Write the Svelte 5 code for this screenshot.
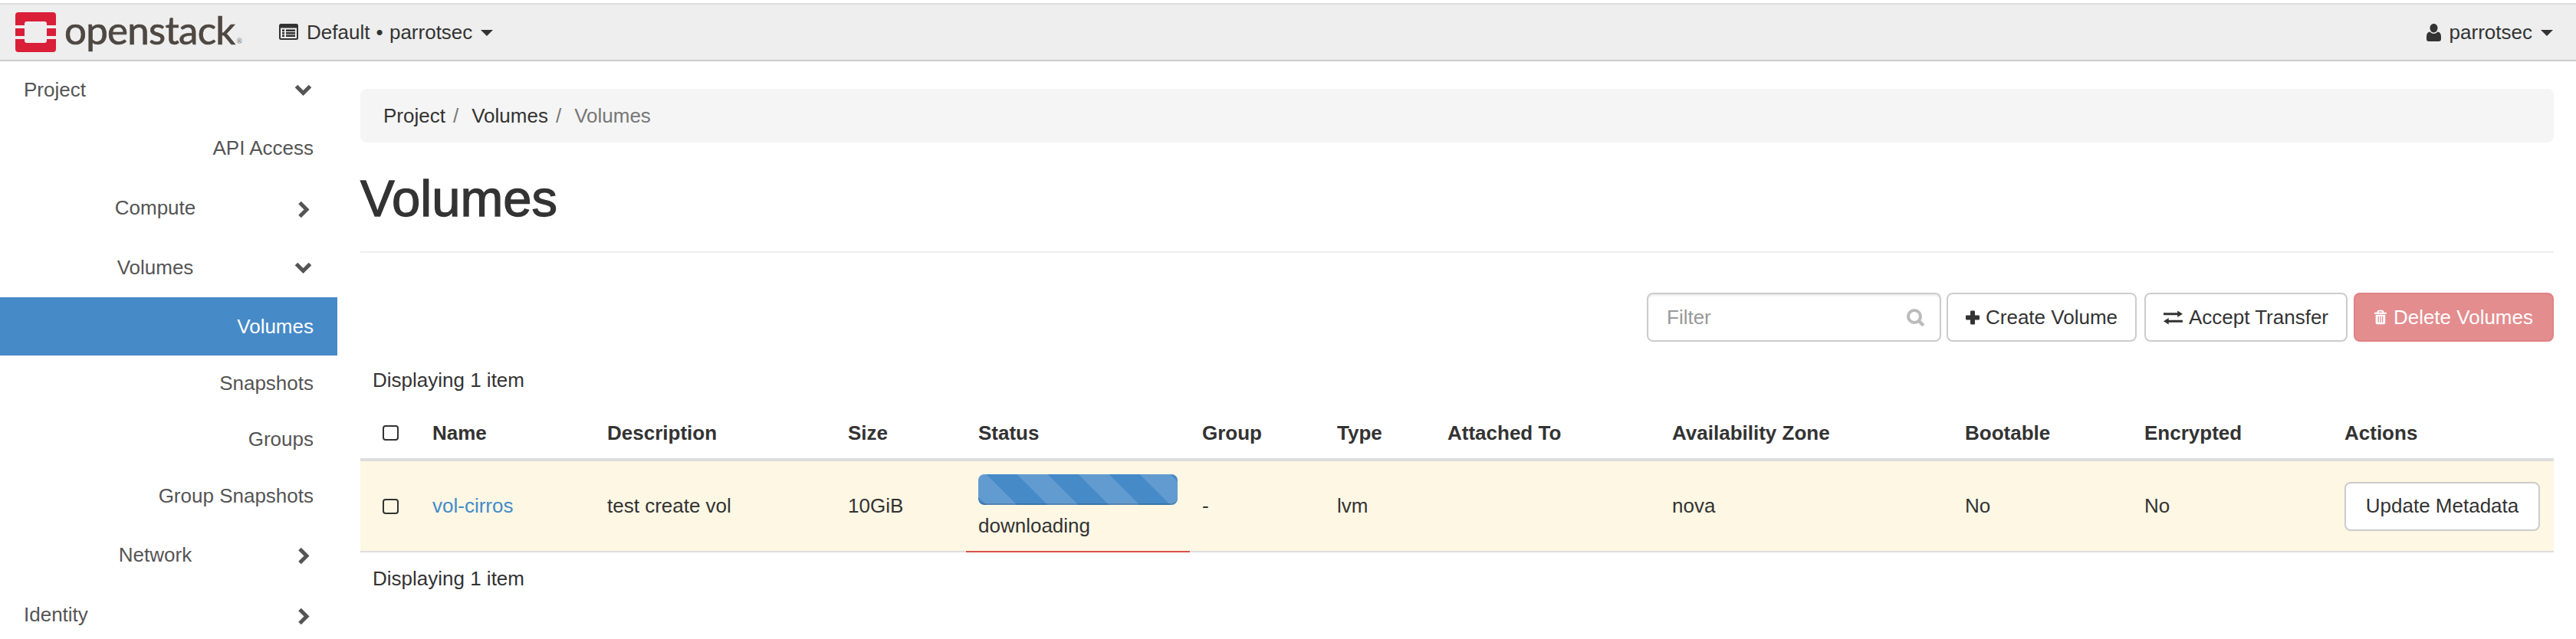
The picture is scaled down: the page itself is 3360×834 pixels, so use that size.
<script>
  const sideRows = [
    { label: 'Project', level: 1, h: 74, chev: 'down' },
    { label: 'API Access', level: 3, h: 79 },
    { label: 'Compute', level: 2, h: 77, chev: 'right' },
    { label: 'Volumes', level: 2, h: 78, chev: 'down' },
    { label: 'Volumes', level: 3, h: 76, active: true },
    { label: 'Snapshots', level: 3, h: 72 },
    { label: 'Groups', level: 3, h: 74 },
    { label: 'Group Snapshots', level: 3, h: 74 },
    { label: 'Network', level: 2, h: 80, chev: 'right' },
    { label: 'Identity', level: 1, h: 77, chev: 'right' }
  ];
  const heads = ['Name', 'Description', 'Size', 'Status', 'Group', 'Type', 'Attached To', 'Availability Zone', 'Bootable', 'Encrypted', 'Actions'];
  const widths = [78, 228, 314, 170, 292, 176, 144, 293, 382, 234, 261, 289];
</script>

<div class="page">
  <header class="nav">
    <div class="logo">
      <svg class="mark" viewBox="0 0 53 52" aria-hidden="true">
        <path fill="#da1f38" d="M4 0h45a4 4 0 0 1 4 4v13H41v-2a3 3 0 0 0-3-3H15a3 3 0 0 0-3 3v2H0V4a4 4 0 0 1 4-4zM0 21h12v10H0zM41 21h12v10H41zM0 35h12v2a3 3 0 0 0 3 3h23a3 3 0 0 0 3-3v-2h12v13a4 4 0 0 1-4 4H4a4 4 0 0 1-4-4z"/>
      </svg>
      <span class="wordmark">openstack</span><span class="reg">®</span>
    </div>
    <div class="project">
      <svg class="ico-list" viewBox="0 0 25 21" aria-hidden="true">
        <path fill="#333" fill-rule="evenodd" d="M2.500 0h20A2.500 2.500 0 0 1 25 2.500v16a2.500 2.500 0 0 1-2.500 2.500h-20A2.500 2.500 0 0 1 0 18.500v-16A2.500 2.500 0 0 1 2.500 0zM2 5.500v13c0 .3.200.5.500.5h20c.3 0 .5-.2.500-.5v-13zM4 7.500h3V10H4zM9 7.500h12V10H9zM4 11h3v2.500H4zM9 11h12v2.500H9zM4 14.500h3V17H4zM9 14.500h12V17H9z"/>
      </svg>
      <span class="project-name">Default • parrotsec</span>
      <span class="caret"></span>
    </div>
    <div class="user">
      <svg class="ico-user" viewBox="0 0 19 23" aria-hidden="true">
        <path fill="#333" d="M9.500 0c3 0 5 2.400 5 5.500S12.500 11.500 9.500 11.500 4.500 8.600 4.500 5.500 6.500 0 9.500 0zM4.500 10.500c1.200 1.600 3 2.500 5 2.500s3.800-.9 5-2.500c2.800.3 4.500 2.500 4.500 6.300v3.200c0 1.800-1.200 3-3 3H3c-1.800 0-3-1.200-3-3v-3.200c0-3.800 1.700-6 4.500-6.300z"/>
      </svg>
      <span class="user-name">parrotsec</span>
      <span class="caret"></span>
    </div>
  </header>

  <div class="body">
    <aside class="side">
      {#each sideRows as r}
        <div class="row l{r.level}" class:active={r.active} style="height:{r.h}px">
          <span class="lab">{r.label}</span>
          {#if r.chev === 'down'}
            <svg class="chev-d" viewBox="0 0 23 15" aria-hidden="true"><path fill="none" stroke="#555" stroke-width="5" d="M2.500 2.500l9 9 9-9"/></svg>
          {:else if r.chev === 'right'}
            <svg class="chev-r" viewBox="0 0 16 23" aria-hidden="true"><path fill="none" stroke="#555" stroke-width="5" d="M3 2.500l9 9-9 9"/></svg>
          {/if}
        </div>
      {/each}
    </aside>

    <main class="main">
      <nav class="crumb"><span>Project</span><i>/</i><span>Volumes</span><i>/</i><span class="cur">Volumes</span></nav>
      <h1>Volumes</h1>
      <div class="tools">
        <div class="filter">
          <span class="ph">Filter</span>
          <svg class="ico-search" viewBox="0 0 23 23" aria-hidden="true"><circle cx="10" cy="10" r="8" fill="none" stroke="#bbb" stroke-width="4"/><path stroke="#bbb" stroke-width="4.500" stroke-linecap="round" d="M16 16l4.500 4.500"/></svg>
        </div>
        <button class="btn create">
          <svg viewBox="0 0 21 21" class="ico-btn" aria-hidden="true"><path fill="#333" d="M8.500 0h4a1.500 1.500 0 0 1 1.500 1.500V7h5.500A1.500 1.500 0 0 1 21 8.500v4a1.500 1.500 0 0 1-1.500 1.500H14v5.500a1.500 1.500 0 0 1-1.500 1.500h-4A1.500 1.500 0 0 1 7 19.500V14H1.500A1.500 1.500 0 0 1 0 12.500v-4A1.500 1.500 0 0 1 1.500 7H7V1.500A1.500 1.500 0 0 1 8.500 0z"/></svg>
          Create Volume
        </button>
        <button class="btn accept">
          <svg viewBox="0 0 26 19" class="ico-x" aria-hidden="true"><path fill="#333" d="M0 3h19V0l7 4.500-7 4.500V6H0zM26 13H7v-3l-7 4.500L7 19v-3h19z"/></svg>
          Accept Transfer
        </button>
        <button class="btn del">
          <svg viewBox="0 0 19 22" class="ico-trash" aria-hidden="true"><path fill="#fff" fill-rule="evenodd" d="M6.500 0h6c.8 0 1.300.4 1.600 1L15 3.500h3a1 1 0 0 1 1 1v1.500H0V4.500a1 1 0 0 1 1-1h3L4.900 1C5.200.4 5.700 0 6.500 0zM7 2l-.6 1.500h6.200L12 2zM2 7h15v13a2 2 0 0 1-2 2H4a2 2 0 0 1-2-2zM5.500 9.500V19H7V9.500zM8.750 9.500V19h1.500V9.500zM12 9.500V19h1.500V9.500z"/></svg>
          Delete Volumes
        </button>
      </div>
      <div class="count">Displaying 1 item</div>
      <table>
        <colgroup>
          {#each widths as w}<col style="width:{w}px" />{/each}
        </colgroup>
        <thead>
          <tr>
            <th class="ck"><span class="box"></span></th>
            {#each heads as h}<th>{h}</th>{/each}
          </tr>
        </thead>
        <tbody>
          <tr>
            <td class="ck"><span class="box"></span></td>
            <td><a href="#top" class="link">vol-cirros</a></td>
            <td>test create vol</td>
            <td>10GiB</td>
            <td class="status">
              <div class="bar"></div>
              <div class="stat">downloading</div>
            </td>
            <td>-</td>
            <td>lvm</td>
            <td></td>
            <td>nova</td>
            <td>No</td>
            <td>No</td>
            <td><button class="btn meta">Update Metadata</button></td>
          </tr>
        </tbody>
      </table>
      <div class="count foot">Displaying 1 item</div>
    </main>
  </div>
</div>

<style>
  :global(body) { margin: 0; background: #fff; }
  .page {
    width: 3360px;
    height: 834px;
    overflow: hidden;
    font-family: "Liberation Sans", Arial, sans-serif;
    font-size: 26px;
    color: #333;
    padding-top: 4px;
    box-sizing: border-box;
  }
  .nav {
    height: 76px;
    box-sizing: border-box;
    background: #eee;
    border-top: 2px solid #ddd;
    border-bottom: 2px solid #ccc;
    display: flex;
    align-items: center;
  }
  .logo { display: flex; align-items: flex-start; width: 364px; padding-left: 20px; box-sizing: border-box; height: 72px; }
  .mark { width: 53px; height: 52px; margin-top: 10px; flex: none; }
  .wordmark {
    font-family: Lato, sans-serif;
    font-size: 51px;
    line-height: 60px;
    letter-spacing: -0.7px;
    color: #4e4742;
    margin-left: 11px;
    margin-top: 3px;
    -webkit-text-stroke: 0.7px #4e4742;
  }
  .reg { font-family: Lato, sans-serif; font-size: 9px; color: #777; margin-top: 42px; margin-left: 2px; }
  .project { display: flex; align-items: center; }
  .project-name { word-spacing: 1px; }
  .ico-list { width: 25px; height: 21px; margin-right: 11px; margin-top: -2px; }
  .caret {
    width: 0; height: 0;
    border-left: 8px solid transparent;
    border-right: 8px solid transparent;
    border-top: 8px solid #333;
    margin-left: 11px;
    margin-top: 2px;
  }
  .user { margin-left: auto; display: flex; align-items: center; padding-right: 30px; }
  .ico-user { width: 19px; height: 23px; margin-right: 11px; }
  .body { display: flex; align-items: flex-start; }
  .side { width: 440px; flex: none; color: #555; }
  .row { display: flex; align-items: center; position: relative; box-sizing: border-box; }
  .l1 { padding-left: 31px; }
  .l2 .lab { width: 100%; text-align: center; padding-right: 35px; }
  .l3 { justify-content: flex-end; padding-right: 31px; }
  .active { background: #468ac8; color: #fff; }
  .chev-d { position: absolute; left: 384px; top: 50%; margin-top: -7px; width: 23px; height: 15px; }
  .chev-r { position: absolute; left: 388px; top: 50%; margin-top: -10px; width: 16px; height: 23px; }

  .main { flex: 1; margin: 0 29px 0 30px; min-width: 0; }
  .crumb {
    margin-top: 36px;
    height: 70px;
    background: #f5f5f5;
    border-radius: 8px;
    display: flex;
    align-items: center;
    padding-left: 30px;
  }
  .crumb i { font-style: normal; color: #777; margin: 0 17px 0 10px; }
  .crumb .cur { color: #777; }
  h1 {
    font-size: 67px;
    font-weight: 400;
    -webkit-text-stroke: 1.3px #333;
    line-height: 72px;
    margin: 37px 0 0;
    height: 105px;
    border-bottom: 2px solid #eee;
  }
  .tools { display: flex; justify-content: flex-end; gap: 8px; margin-top: 52px; height: 64px; }
  .filter {
    width: 384px;
    box-sizing: border-box;
    border: 2px solid #ccc;
    border-radius: 8px;
    box-shadow: inset 0 2px 2px rgba(0,0,0,.075);
    display: flex;
    align-items: center;
    justify-content: space-between;
    padding: 0 20px 0 24px;
    margin-right: -1px;
  }
  .ph { color: #999; }
  .ico-search { width: 23px; height: 23px; }
  .btn {
    font: inherit;
    color: #333;
    background: #fff;
    border: 2px solid #ccc;
    border-radius: 8px;
    height: 64px;
    box-sizing: border-box;
    padding: 0 23px;
    display: inline-flex;
    align-items: center;
    gap: 8px;
    white-space: nowrap;
  }
  .create { width: 248px; }
  .accept { width: 265px; margin-left: 2px; }
  .del { width: 261px; background: #e38d8f; border-color: #e08385; color: #fff; padding: 0 25px; gap: 9px; }
  .ico-btn { width: 21px; height: 21px; }
  .ico-x { width: 26px; height: 19px; }
  .ico-trash { width: 19px; height: 22px; }
  .count { margin-top: 36px; padding-left: 16px; line-height: 28px; height: 28px; }
  table { border-collapse: collapse; table-layout: fixed; width: 2861px; margin-top: 22px; }
  th, td { text-align: left; padding: 0 16px; box-sizing: border-box; }
  th { height: 68px; font-weight: 700; border-bottom: 4px solid #ddd; }
  td { height: 120px; background: #fdf7e4; border-bottom: 2px solid #ddd; }
  .ck { padding-left: 29px; }
  .box {
    display: block;
    width: 21px; height: 20px;
    box-sizing: border-box;
    border: 2px solid #333;
    border-radius: 4px;
    background: #fff;
  }
  td .box { background: transparent; }
  .link { color: #428bca; text-decoration: none; }
  .status { border-bottom: 2px solid #d9534f; }
  .bar {
    height: 40px;
    border-radius: 8px;
    background-color: #468ac8;
    background-image: linear-gradient(45deg, rgba(255,255,255,.15) 25%, transparent 25%, transparent 50%, rgba(255,255,255,.15) 50%, rgba(255,255,255,.15) 75%, transparent 75%, transparent);
    background-size: 80px 80px;
    background-position: -29px 0;
    box-shadow: inset 0 -2px 0 rgba(0,0,0,.15);
  }
  .stat { margin-top: 11px; line-height: 32px; }
  .meta { height: 64px; width: 255px; padding: 0; justify-content: center; }
  .foot { margin-top: 20px; }
</style>
